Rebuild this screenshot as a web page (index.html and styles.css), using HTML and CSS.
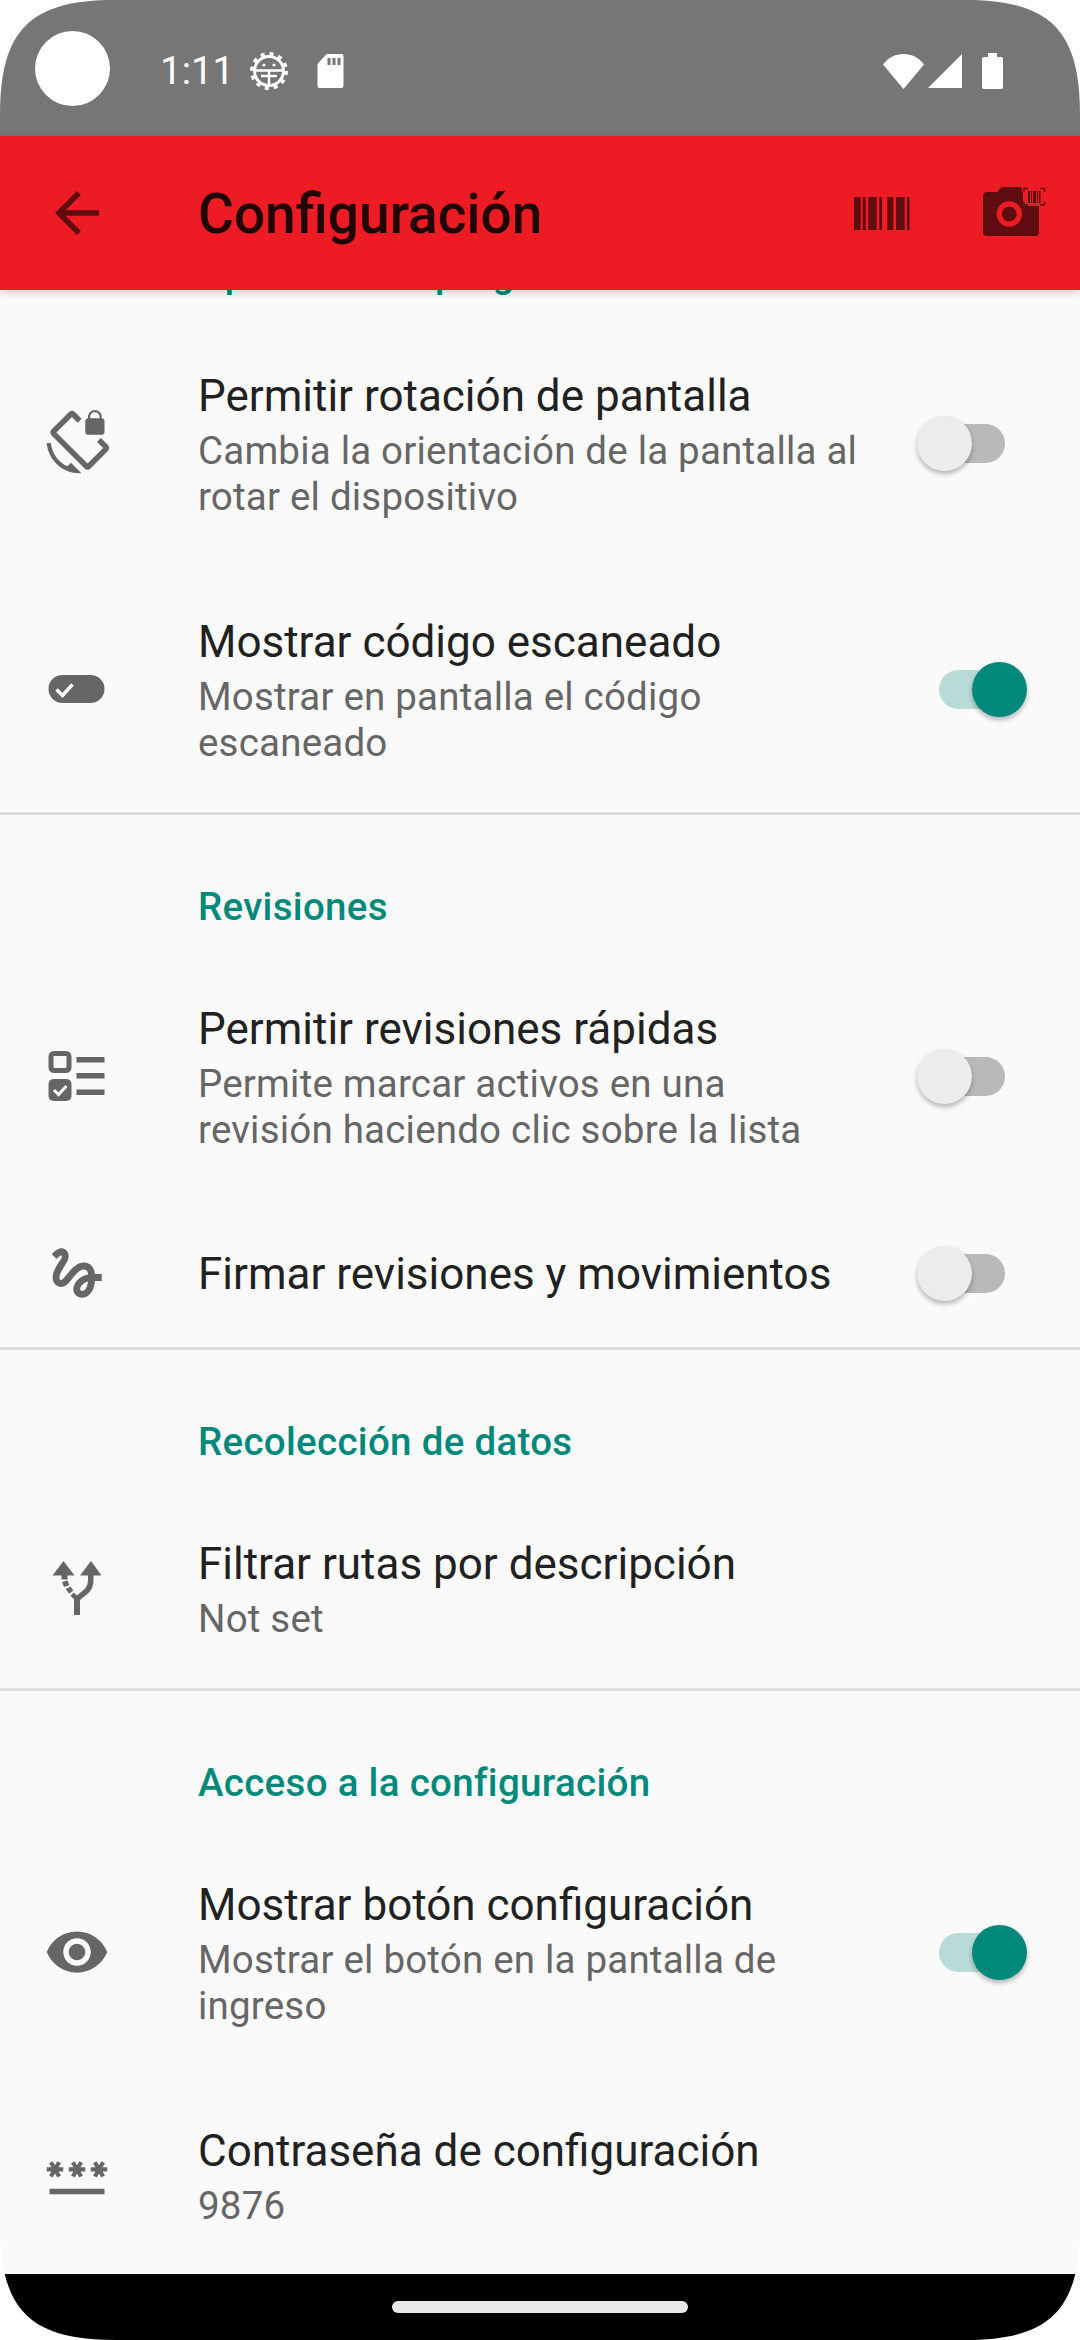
FILE: index.html
```html
<!DOCTYPE html>
<html lang="es">

<head>
    <meta charset="UTF-8" />
    <meta name="viewport" content="width=device-width, initial-scale=1.0" />
    <title>Configuración</title>
    <link rel="stylesheet" href="styles.css">
</head>

<body>
    <div class="screen">
        <div class="status-bar">
            <div class="camera-hole"></div>
            <span class="clock">1:11</span>
            <svg class="st-adb" viewBox="0 0 38 38">
                <circle cx="19" cy="19" r="14.500" fill="none" stroke="#fff" stroke-width="3" />
                <circle cx="19" cy="19" r="17" fill="none" stroke="#fff" stroke-width="4" stroke-dasharray="4 4.900" />
                <path d="M6 18.500H32M19 18.500V33M11 24H27" fill="none" stroke="#fff" stroke-width="2.400" />
                <circle cx="14" cy="13" r="1.600" fill="#fff" />
                <circle cx="24" cy="13" r="1.600" fill="#fff" />
            </svg>
            <svg class="st-sd" viewBox="0 0 26 34">
                <path d="M9 0H24a2 2 0 0 1 2 2V32a2 2 0 0 1-2 2H2a2 2 0 0 1-2-2V10z" fill="#fff" />
                <path d="M10 4h3v7h-3zM15 4h3v7h-3zM20 4h3v7h-3z" fill="#767676" />
            </svg>
            <div class="status-right">
                <svg class="st-wifi" viewBox="0 0 41 35">
                    <path d="M0 10.500C5 4 12 0 20.500 0S36 4 41 10.500L20.500 35z" fill="#fff" />
                </svg>
                <svg class="st-signal" viewBox="0 0 34 34">
                    <path d="M34 0V34H0z" fill="#fff" />
                </svg>
                <svg class="st-battery" viewBox="0 0 21 36">
                    <path d="M6 0h9v4h4a2 2 0 0 1 2 2V34a2 2 0 0 1-2 2H2a2 2 0 0 1-2-2V6a2 2 0 0 1 2-2h4z" fill="#fff" />
                </svg>
            </div>
        </div>

        <header class="app-bar">
            <svg class="back-icon" viewBox="0 0 24 24">
                <path d="M20 11H7.830l5.590-5.590L12 4l-8 8 8 8 1.410-1.410L7.830 13H20v-2z" />
            </svg>
            <h1>Configuración</h1>
            <svg class="barcode-icon" viewBox="0 0 56 33">
                <path d="M0 0h6.700v33H0zM8.700 0h3v33h-3zM14.300 0h8.400v33h-8.400zM25.300 0H28v33h-2.700zM33.300 0h6v33h-6zM42 0h8.700v33H42zM53 0h2.500v33H53z" />
            </svg>
            <svg class="camera-icon" viewBox="0 0 64 50">
                <path d="M4 5H14L17 1.500Q18 0 20 0H36Q39 0 39 3V5H52Q56 5 56 9V45Q56 49 52 49H4Q0 49 0 45V9Q0 5 4 5z" />
                <circle cx="26.300" cy="27" r="12.700" fill="#ed1c24" />
                <circle cx="26.300" cy="27" r="7.400" />
                <rect x="40" y="0" width="22" height="19" rx="2" fill="#ed1c24" />
                <path d="M41 5V1.500H45M57 1.500H61.500V5M41 14.500V18H45M57 18H61.500V14.500" fill="none" stroke="#5f0c10" stroke-width="1.300" />
                <path d="M45 4h2v12h-2zM48 4h1v12h-1zM50 4h3v12h-3zM54 4h1v12h-1zM56 4h1.500v12H56z" />
            </svg>
        </header>

        <main class="settings">
            <div class="settings-list">
                <div class="section-title">Opciones del programa</div>

                <div class="pref">
                    <svg class="pref-icon" viewBox="0 0 24 24">
                        <path d="M23.250 12.770l-2.570-2.570-1.410 1.410 2.220 2.220-5.660 5.660L4.510 8.170l5.660-5.660 2.100 2.100 1.410-1.410L11.230.75c-.59-.59-1.540-.59-2.120 0L2.750 7.110c-.59.59-.59 1.540 0 2.120l12.020 12.020c.59.59 1.540.59 2.120 0l6.360-6.360c.59-.59.59-1.540 0-2.120zM8.470 20.480C5.200 18.940 2.860 15.760 2.500 12H1c.51 6.160 5.660 11 11.950 11l.66-.03-3.810-3.820-1.330 1.330zM16 9h5c.55 0 1-.45 1-1V4c0-.55-.45-1-1-1v-.5C21 1.120 19.880 0 18.500 0S16 1.120 16 2.500V3c-.55 0-1 .45-1 1v4c0 .55.45 1 1 1zm.8-6.500c0-.94.76-1.700 1.700-1.700s1.700.76 1.700 1.700V3h-3.400v-.5z" />
                    </svg>
                    <div class="pref-text">
                        <div class="pref-title">Permitir rotación de pantalla</div>
                        <div class="pref-sub">Cambia la orientación de la pantalla al rotar el dispositivo</div>
                    </div>
                    <div class="switch"><span class="track"></span><span class="thumb"></span></div>
                </div>

                <div class="pref last">
                    <svg class="pref-icon" viewBox="-1.500 -1.500 66 66">
                        <rect x="3" y="17.500" width="56" height="28" rx="14" />
                        <path d="M11 32L17 38L27 27" fill="none" stroke="#fafafa" stroke-width="3.500" />
                    </svg>
                    <div class="pref-text">
                        <div class="pref-title">Mostrar código escaneado</div>
                        <div class="pref-sub">Mostrar en pantalla el código escaneado</div>
                    </div>
                    <div class="switch on"><span class="track"></span><span class="thumb"></span></div>
                </div>

                <div class="section-title">Revisiones</div>

                <div class="pref">
                    <svg class="pref-icon" viewBox="-1.500 -1.500 66 66">
                        <rect x="5.500" y="9" width="18" height="17" rx="3" fill="none" stroke="#666" stroke-width="5" />
                        <rect x="3" y="34.500" width="23" height="22" rx="5" />
                        <path d="M8.500 45.500L13 50L21 41.500" fill="none" stroke="#fafafa" stroke-width="3" />
                        <path d="M31 12.500h28v5.500H31zM31 28.500h28v5.500H31zM31 45h28v5.500H31z" />
                    </svg>
                    <div class="pref-text">
                        <div class="pref-title">Permitir revisiones rápidas</div>
                        <div class="pref-sub">Permite marcar activos en una revisión haciendo clic sobre la lista</div>
                    </div>
                    <div class="switch"><span class="track"></span><span class="thumb"></span></div>
                </div>

                <div class="pref single last">
                    <svg class="pref-icon" viewBox="0 0 24 24">
                        <path d="M4.590 6.890c.7-.71 1.400-1.350 1.710-1.220.5.2 0 1.030-.3 1.520-.25.42-2.860 3.890-2.860 6.310 0 1.280.48 2.340 1.340 2.980.75.56 1.740.73 2.640.46 1.070-.31 1.950-1.400 3.060-2.770 1.210-1.490 2.830-3.440 4.080-3.440 1.630 0 1.650 1.010 1.760 1.790-3.780.64-5.380 3.670-5.380 5.370 0 1.700 1.440 3.090 3.210 3.090 1.630 0 4.290-1.330 4.690-6.100H21v-2.500h-2.470c-.15-1.650-1.090-4.200-4.030-4.200-2.250 0-4.180 1.910-4.940 2.840-.58.73-2.060 2.480-2.290 2.720-.25.3-.68.84-1.110.84-.45 0-.72-.83-.36-1.920.35-1.090 1.400-2.860 1.850-3.520.78-1.140 1.300-1.920 1.300-3.280C8.950 3.690 7.310 3 6.440 3 5.120 3 3.970 4 3.720 4.250c-.36.36-.66.66-.88.93l1.750 1.710zm9.290 11.660c-.31 0-.74-.26-.74-.72 0-.6.73-2.200 2.870-2.760-.3 2.690-1.430 3.480-2.130 3.480z" />
                    </svg>
                    <div class="pref-text">
                        <div class="pref-title">Firmar revisiones y movimientos</div>
                    </div>
                    <div class="switch"><span class="track"></span><span class="thumb"></span></div>
                </div>

                <div class="section-title">Recolección de datos</div>

                <div class="pref last">
                    <svg class="pref-icon" viewBox="-1.500 -1.500 66 66">
                        <path d="M28.500 58.500H34.500V43.500L42.500 37Q48 32 48 24V19H56L45.500 4.500L34.500 19H42.500V23Q42.500 30 38 33.500L31.500 39L28 36L25 39.500L28.500 42.500z" />
                        <path d="M7 19L18 4.500L29 19H22V23H16V19zM16.500 25.500L22 24L23.800 28.800L18.500 30.600zM20.300 32.500L25 30L27.800 33.900L23.500 37.200z" />
                    </svg>
                    <div class="pref-text">
                        <div class="pref-title">Filtrar rutas por descripción</div>
                        <div class="pref-sub">Not set</div>
                    </div>
                </div>

                <div class="section-title">Acceso a la configuración</div>

                <div class="pref">
                    <svg class="pref-icon" viewBox="0 0 24 24">
                        <path d="M12 4.500C7 4.500 2.730 7.610 1 12c1.730 4.390 6 7.500 11 7.500s9.270-3.110 11-7.500c-1.730-4.390-6-7.500-11-7.500zM12 17c-2.760 0-5-2.240-5-5s2.240-5 5-5 5 2.240 5 5-2.240 5-5 5zm0-8c-1.660 0-3 1.340-3 3s1.340 3 3 3 3-1.340 3-3-1.340-3-3-3z" />
                    </svg>
                    <div class="pref-text">
                        <div class="pref-title">Mostrar botón configuración</div>
                        <div class="pref-sub">Mostrar el botón en la pantalla de ingreso</div>
                    </div>
                    <div class="switch on"><span class="track"></span><span class="thumb"></span></div>
                </div>

                <div class="pref">
                    <svg class="pref-icon" viewBox="0 0 24 24">
                        <path d="M2 17h20v2H2v-2zm1.150-4.050L4 11.470l.85 1.480 1.300-.75-.85-1.480H7v-1.500H5.300l.85-1.470L4.850 7 4 8.470 3.150 7l-1.300.75.85 1.470H1v1.500h1.700l-.85 1.480 1.300.75zm6.700-.75l1.300.75.85-1.480.85 1.480 1.300-.75-.85-1.480H15v-1.500h-1.700l.85-1.470-1.300-.75L12 8.470 11.150 7l-1.300.75.85 1.470H9v1.500h1.700l-.85 1.480zM23 9.220h-1.700l.85-1.470-1.300-.75L20 8.470 19.150 7l-1.300.75.85 1.470H17v1.500h1.700l-.85 1.480 1.300.75.85-1.480.85 1.480 1.300-.75-.85-1.480H23v-1.500z" />
                    </svg>
                    <div class="pref-text">
                        <div class="pref-title">Contraseña de configuración</div>
                        <div class="pref-sub">9876</div>
                    </div>
                </div>
            </div>
        </main>

        <div class="nav-bar"><span class="home-pill"></span></div>
    </div>
</body>

</html>
```
FILE: styles.css
```css
html,
body {
    margin: 0;
    padding: 0;
    background-color: #fff;
    font-family: Roboto, "Noto Sans", sans-serif;
}

.screen {
    width: 1080px;
    height: 2340px;
    display: flex;
    flex-direction: column;
    overflow: hidden;
    background-color: #fafafa;
    clip-path: path("M0 115C0 30 30 0 115 0H965C1050 0 1080 30 1080 115V2225C1080 2310 1050 2340 965 2340H115C30 2340 0 2310 0 2225Z");
}

/* status bar */
.status-bar {
    height: 136px;
    flex: none;
    display: flex;
    align-items: center;
    background-color: #767676;
    color: #fff;
    padding: 0 77px 0 35px;
    box-sizing: border-box;
}

.camera-hole {
    width: 75px;
    height: 75px;
    border-radius: 50%;
    background-color: #fff;
    margin-right: 50px;
}

.clock {
    font-size: 38.500px;
    width: 90px;
    margin-top: 4px;
}

.st-adb {
    width: 38px;
    height: 38px;
    margin: 6px 29px 0 0;
}

.st-sd {
    width: 27px;
    height: 34px;
    margin-top: 6px;
}

.status-right {
    margin-left: auto;
    display: flex;
    align-items: center;
    margin-top: 6px;
}

.st-wifi {
    width: 41px;
    height: 35px;
    margin-right: 4px;
}

.st-signal {
    width: 34px;
    height: 34px;
    margin-right: 20px;
}

.st-battery {
    width: 21px;
    height: 36px;
}

/* toolbar */
.app-bar {
    height: 154px;
    flex: none;
    display: flex;
    align-items: center;
    position: relative;
    z-index: 2;
    background-color: #ed1c24;
    box-shadow: 0 3px 8px rgba(0, 0, 0, 0.16);
    fill: #5f0c10;
}

.back-icon {
    width: 66px;
    height: 66px;
    margin-left: 44px;
}

.app-bar h1 {
    margin: 2px 0 0 88px;
    font-size: 55px;
    font-weight: 500;
    color: #200304;
}

.barcode-icon {
    width: 56px;
    height: 33px;
    margin-left: auto;
}

.camera-icon {
    width: 64px;
    height: 50px;
    margin: -2px 33px 0 73px;
}

/* settings list */
.settings {
    flex: 1;
    min-height: 0;
    overflow: hidden;
}

.settings-list {
    margin-top: -109px;
}

.section-title {
    padding: 70px 0 23px 198px;
    font-size: 38.500px;
    line-height: 46px;
    letter-spacing: 0.3px;
    font-weight: 500;
    color: #00897b;
}

.pref {
    display: flex;
    align-items: center;
    padding: 50px 53px 46px 44px;
}

.pref.single {
    padding-top: 41px;
    padding-bottom: 41px;
}

.pref.last {
    border-bottom: 3px solid #dedede;
    margin-bottom: -1px;
}

.pref-icon {
    width: 66px;
    height: 66px;
    flex: none;
    fill: #666;
    margin: 0 88px 4px 0;
}

.pref.single .pref-icon {
    margin-bottom: 0;
}

.pref-text {
    width: 662px;
    flex: none;
}

.pref.single .pref-text {
    padding-top: 2px;
}

.pref-title {
    font-size: 44px;
    line-height: 52px;
    color: #212121;
}

.pref-sub {
    margin-top: 6px;
    font-size: 38.500px;
    line-height: 46px;
    letter-spacing: 0.2px;
    color: #666;
}

/* switch */
.switch {
    position: relative;
    width: 110px;
    height: 55px;
    flex: none;
    margin: 0 0 4px auto;
}

.pref.single .switch {
    margin-bottom: 0;
}

.track {
    position: absolute;
    left: 22px;
    top: 8px;
    width: 66px;
    height: 39px;
    border-radius: 20px;
    background-color: #b9b9b9;
}

.thumb {
    position: absolute;
    left: 0;
    top: 0;
    width: 55px;
    height: 55px;
    border-radius: 50%;
    background-color: #ececec;
    box-shadow: 0 3px 5px rgba(0, 0, 0, 0.28);
}

.switch.on .track {
    background-color: #b8dbd8;
}

.switch.on .thumb {
    left: 55px;
    background-color: #00897b;
}

/* bottom bar */
.nav-bar {
    height: 66px;
    flex: none;
    position: relative;
    z-index: 2;
    display: flex;
    justify-content: center;
    background-color: #000;
}

.home-pill {
    width: 296px;
    height: 12px;
    margin-top: 27px;
    border-radius: 6px;
    background-color: #e8e8e8;
}
```
